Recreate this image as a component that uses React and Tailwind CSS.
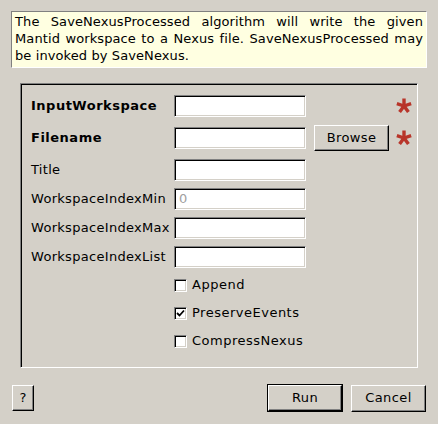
const raised =
  "border border-t-white border-l-white border-r-black border-b-black shadow-[inset_-1px_-1px_0_#808080] bg-[#d4d0c8]";
const sunken =
  "border border-t-[#808080] border-l-[#808080] border-r-white border-b-white shadow-[inset_1px_1px_0_#000,inset_-1px_-1px_0_#d4d0c8] bg-white";

function Star() {
  const arms = [0, 72, 144, 216, 288];
  return (
    <svg width="16" height="16" viewBox="-8 -8 16 16" className="shrink-0">
      {arms.map((a) => (
        <line
          key={a}
          x1="0"
          y1="0"
          x2="0"
          y2="-7.5"
          stroke="#b8352a"
          strokeWidth="3.4"
          strokeLinecap="butt"
          transform={`rotate(${a})`}
        />
      ))}
    </svg>
  );
}

function TextBox({ placeholder }) {
  return (
    <div className={`w-[132px] h-[22px] ${sunken} flex items-center px-[4px]`}>
      {placeholder && <span className="text-[#a0a0a0]">{placeholder}</span>}
    </div>
  );
}

function Row({ label, bold, placeholder, browse, required, className = "" }) {
  return (
    <div className={`flex items-center ${className}`}>
      <div className={`w-[143px] ${bold ? "font-bold tracking-[0.5px]" : "tracking-[0.3px]"}`}>{label}</div>
      <TextBox placeholder={placeholder} />
      <div className="w-[83px] pl-[8px] flex">
        {browse && (
          <button className={`w-[75px] h-[26px] tracking-[0.4px] ${raised}`}>Browse</button>
        )}
      </div>
      <div className="pl-[7px] flex">{required && <Star />}</div>
    </div>
  );
}

function Check({ label, checked, className = "" }) {
  return (
    <div className={`flex items-center h-[22px] pl-[143px] ${className}`}>
      <div className={`w-[13px] h-[13px] ${sunken} flex items-center justify-center`}>
        {checked && (
          <svg width="9" height="9" viewBox="0 0 9 9">
            <path d="M1 4 L3.5 6.5 L8 1.5" stroke="#000" strokeWidth="1.8" fill="none" />
          </svg>
        )}
      </div>
      <span className="ml-[5px] tracking-[0.5px]">{label}</span>
    </div>
  );
}

export default function App() {
  return (
    <div className="w-[438px] h-[424px] bg-[#d4d0c8] text-[13px] text-black font-['DejaVu_Sans',sans-serif] pt-[11px] relative">
      <div className="mx-[11px] w-[416px] h-[57px] bg-[#ffffe1] border border-t-[#808080] border-l-[#808080] border-r-white border-b-white px-[3px] pt-[1px] leading-[17px] text-justify tracking-[0.1px]">
        The SaveNexusProcessed algorithm will write the given Mantid workspace
        to a Nexus file. SaveNexusProcessed may be invoked by SaveNexus.
      </div>

      <div className="ml-[20px] mt-[15px] w-[398px] h-[285px] border border-t-[#808080] border-l-[#808080] border-r-white border-b-white shadow-[inset_1px_1px_0_#000] pl-[10px] pt-[9px]">
        <Row label="InputWorkspace" bold required className="h-[26px]" />
        <Row label="Filename" bold browse required className="h-[26px] mt-[6px]" />
        <Row label="Title" className="h-[22px] mt-[8px]" />
        <Row label="WorkspaceIndexMin" placeholder="0" className="h-[22px] mt-[7px]" />
        <Row label="WorkspaceIndexMax" className="h-[22px] mt-[7px]" />
        <Row label="WorkspaceIndexList" className="h-[22px] mt-[7px]" />
        <Check label="Append" className="mt-[6px]" />
        <Check label="PreserveEvents" checked className="mt-[6px]" />
        <Check label="CompressNexus" className="mt-[6px]" />
      </div>

      <div className="flex items-center mt-[16px] px-[12px]">
        <button className={`w-[22px] h-[26px] ${raised}`}>?</button>
        <div className="flex-1" />
        <div className="border border-black">
          <button className={`w-[74px] h-[26px] tracking-[0.4px] ${raised} block`}>Run</button>
        </div>
        <button className={`ml-[8px] w-[75px] h-[27px] tracking-[0.4px] ${raised}`}>Cancel</button>
      </div>
    </div>
  );
}
